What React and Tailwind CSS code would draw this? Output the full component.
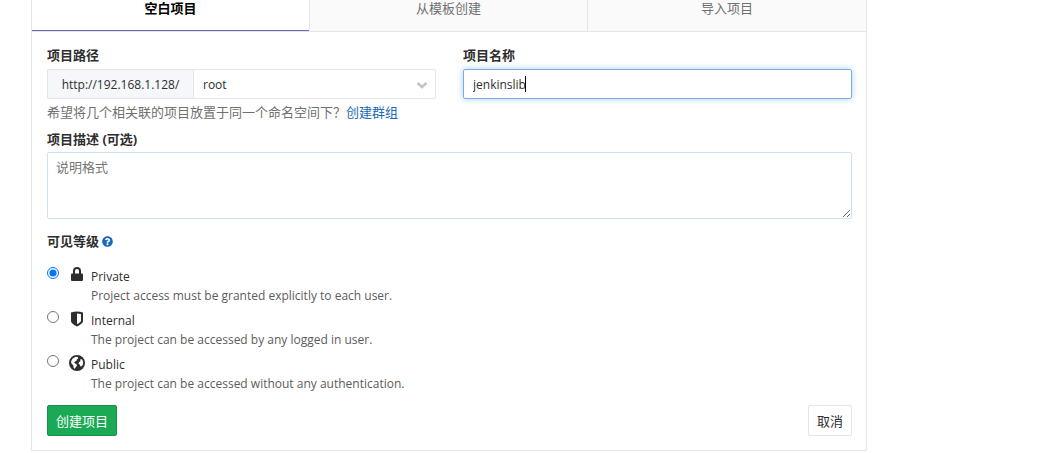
import React, { useState } from 'react';
import { FaQuestionCircle } from 'react-icons/fa';

const LockIcon = () => (
  <svg viewBox="0 0 16 16" className="h-4 w-4" fill="currentColor" aria-hidden="true">
    <path
      fillRule="evenodd"
      d="M4 6.500V4a4 4 0 0 1 8 0v2.500h1a1 1 0 0 1 1 1V13a1 1 0 0 1-1 1H3a1 1 0 0 1-1-1V7.500a1 1 0 0 1 1-1h1zm2 0h4V4a2 2 0 1 0-4 0v2.500z"
    />
  </svg>
);

const ShieldIcon = () => (
  <svg viewBox="0 0 16 16" className="h-4 w-4" fill="currentColor" aria-hidden="true">
    <path
      fillRule="evenodd"
      d="M2 1.500Q5 .5 8 .5t6 1V10c0 2-2.500 3.700-6 5.500C4.500 13.700 2 12 2 10V1.500zM8 2.500V13.200c2.600-1.400 4-2.400 4-3.400V3Q10 2.500 8 2.500z"
    />
  </svg>
);

const EarthIcon = () => (
  <svg viewBox="0 0 16 16" className="h-4 w-4" fill="currentColor" aria-hidden="true">
    <path
      fillRule="evenodd"
      d="M8 0a8 8 0 1 1 0 16A8 8 0 0 1 8 0zM6.500 1.800L8.800 2l.4 1.500-1.400 1-.4 1.400-1.500.6-.8 1.300 1.300.7 1.500 1.200-.2 1.400-1.300 1.600-.7 1.300-1.200-1.400-.2-2.400-1.700-1.500L2 6.500l1.500-2.800 3-1.900zM11.500 4l1.600.6 1 2.200-.1 2.500-1.200 2-1.300.3-.6-1.800-1.300-.9.200-1.700 1.400-.8.3-2.400z"
    />
  </svg>
);

const tabs = ['空白项目', '从模板创建', '导入项目'];

const levels = [
  {
    id: 'private',
    icon: LockIcon,
    label: 'Private',
    description: 'Project access must be granted explicitly to each user.',
  },
  {
    id: 'internal',
    icon: ShieldIcon,
    label: 'Internal',
    description: 'The project can be accessed by any logged in user.',
  },
  {
    id: 'public',
    icon: EarthIcon,
    label: 'Public',
    description: 'The project can be accessed without any authentication.',
  },
];

const App = () => {
  const [activeTab, setActiveTab] = useState(0);
  const [name, setName] = useState('jenkinslib');
  const [level, setLevel] = useState('private');

  return (
    <div className="bg-white pr-[180px] pl-[31px] font-['Open_Sans','Noto_Sans_CJK_SC',sans-serif] text-[12px] leading-4 text-[#2e2e2e]">
      <div className="border-x border-b border-[#e5e5e5]">
        {/* Tabs */}
        <div role="tablist" className="grid grid-cols-3 divide-x divide-[#e5e5e5] border-b border-[#e5e5e5]">
          {tabs.map((tab, index) => (
            <button
              key={tab}
              type="button"
              role="tab"
              aria-selected={activeTab === index}
              onClick={() => setActiveTab(index)}
              className={
                activeTab === index
                  ? 'relative h-[31px] bg-white pb-4 text-[13px] leading-4 font-bold text-black after:absolute after:inset-x-0 after:bottom-0 after:h-px after:bg-[#6666c4]'
                  : 'h-[31px] bg-[#fafafa] pb-4 text-[13px] leading-4 text-[#707070]'
              }
            >
              {tab}
            </button>
          ))}
        </div>

        <form className="pt-[15px] pr-[14px] pb-[14px] pl-[15px]" onSubmit={(e) => e.preventDefault()}>
          <div className="grid grid-cols-2 gap-[27px]">
            {/* Project path */}
            <div>
              <label htmlFor="namespace" className="block text-[13px] font-bold">项目路径</label>
              <div className="mt-[6px] flex h-[30px] rounded-xs border border-[#e5e5e5]">
                <div className="flex w-[146px] items-center justify-center border-r border-[#e5e5e5] bg-[#f6f7fa] pt-px">
                  http://192.168.1.128/
                </div>
                <div className="relative flex-1">
                  <select id="namespace" className="h-full w-full appearance-none bg-white px-[9px] pt-px outline-none">
                    <option>root</option>
                  </select>
                  <svg viewBox="0 0 12 12" className="pointer-events-none absolute top-[9px] right-[7px] h-3 w-3" aria-hidden="true">
                    <path d="M1.500 4L6 8l4.500-4" fill="none" stroke="#c4c4c4" strokeWidth="2.500" />
                  </svg>
                </div>
              </div>
            </div>

            {/* Project name */}
            <div>
              <label htmlFor="name" className="block text-[13px] font-bold">项目名称</label>
              <div className="relative mt-[6px]">
                <input
                  id="name"
                  type="text"
                  value={name}
                  onChange={(e) => setName(e.target.value)}
                  className="block h-[30px] w-full rounded-xs border border-[#73afea] px-[9px] caret-transparent shadow-[0_0_6px_rgba(115,175,234,0.6)] outline-none"
                />
                <span className="absolute top-[7px] left-[62px] h-4 w-px bg-black" />
              </div>
            </div>
          </div>

          <p className="mt-[5px] text-[13px] text-[#707070]">
            希望将几个相关联的项目放置于同一个命名空间下？
            <a href="#new-group" className="text-[#1b69b6]">创建群组</a>
          </p>

          {/* Description */}
          <label htmlFor="description" className="mt-[11px] block text-[13px] font-bold">项目描述 (可选)</label>
          <textarea
            id="description"
            placeholder="说明格式"
            className="mt-[5px] block h-[67px] w-full resize-y rounded-xs border border-[#cbe2f5] px-2 py-[6px] text-[13px] leading-4 outline-none placeholder:text-[#777777]"
          />

          {/* Visibility */}
          <fieldset className="mt-[14px]">
            <legend className="flex items-center gap-[3px] text-[13px] font-bold">
              可见等级
              <a href="#visibility-help" aria-label="Help" className="text-[#1b69b6]">
                <FaQuestionCircle className="h-[11px] w-[11px]" />
              </a>
            </legend>
            <div className="mt-[18px] space-y-[6px]">
              {levels.map((item) => {
                const Icon = item.icon;

                return (
                  <div key={item.id} className="flex h-[38px] items-start">
                    <input
                      id={item.id}
                      type="radio"
                      name="visibility"
                      checked={level === item.id}
                      onChange={() => setLevel(item.id)}
                      className="h-3 w-3"
                    />
                    <label htmlFor={item.id} className="flex pl-[10px]">
                      <Icon />
                      <span className="pt-[2px] pl-[6px]">
                        <span className="block">{item.label}</span>
                        <span className="mt-[3px] block text-[#5c5c5c]">{item.description}</span>
                      </span>
                    </label>
                  </div>
                );
              })}
            </div>
          </fieldset>

          {/* Actions */}
          <div className="mt-[12px] flex justify-between">
            <button type="submit" className="h-[31px] rounded-xs border border-[#168f48] bg-[#1aaa55] px-2 text-[13px] text-white">
              创建项目
            </button>
            <button type="button" className="h-[31px] rounded-xs border border-[#e5e5e5] bg-white px-2 text-[13px]">
              取消
            </button>
          </div>
        </form>
      </div>
    </div>
  );
};

export default App;
